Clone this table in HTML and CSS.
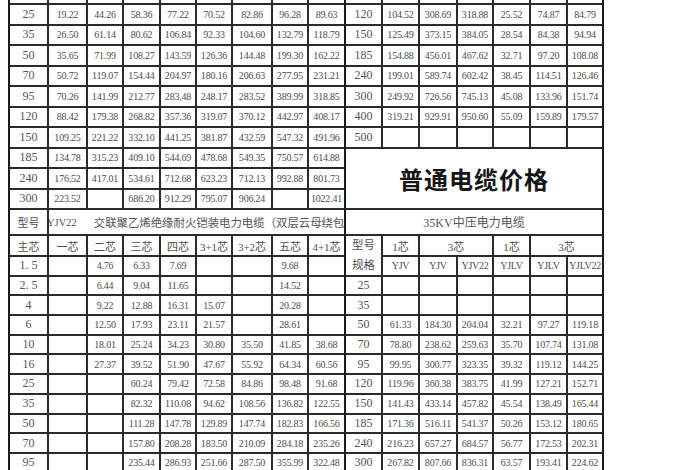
FILE: index.html
```html
<!DOCTYPE html>
<html lang="zh">
<head>
<meta charset="utf-8">
<title>普通电缆价格</title>
<link rel="stylesheet" href="styles.css">
</head>
<body>
<div class="sheet">
  <div class="grid left">
    <div class="c k">16</div><div class="c">12.17</div><div class="c">28.85</div><div class="c">38.04</div><div class="c">50.31</div><div class="c">46.12</div><div class="c">53.87</div><div class="c">62.77</div><div class="c">58.43</div>
    <div class="c k">25</div><div class="c">19.22</div><div class="c">44.26</div><div class="c">58.36</div><div class="c">77.22</div><div class="c">70.52</div><div class="c">82.86</div><div class="c">96.28</div><div class="c">89.63</div>
    <div class="c k">35</div><div class="c">26.50</div><div class="c">61.14</div><div class="c">80.62</div><div class="c">106.84</div><div class="c">92.33</div><div class="c">104.60</div><div class="c">132.79</div><div class="c">118.79</div>
    <div class="c k">50</div><div class="c">35.65</div><div class="c">71.99</div><div class="c">108.27</div><div class="c">143.59</div><div class="c">126.36</div><div class="c">144.48</div><div class="c">199.30</div><div class="c">162.22</div>
    <div class="c k">70</div><div class="c">50.72</div><div class="c">119.07</div><div class="c">154.44</div><div class="c">204.97</div><div class="c">180.16</div><div class="c">206.63</div><div class="c">277.95</div><div class="c">231.21</div>
    <div class="c k">95</div><div class="c">70.26</div><div class="c">141.99</div><div class="c">212.77</div><div class="c">283.48</div><div class="c">248.17</div><div class="c">283.52</div><div class="c">389.99</div><div class="c">318.85</div>
    <div class="c k">120</div><div class="c">88.42</div><div class="c">179.38</div><div class="c">268.82</div><div class="c">357.36</div><div class="c">319.07</div><div class="c">370.12</div><div class="c">442.97</div><div class="c">408.17</div>
    <div class="c k">150</div><div class="c">109.25</div><div class="c">221.22</div><div class="c">332.10</div><div class="c">441.25</div><div class="c">381.87</div><div class="c">432.59</div><div class="c">547.32</div><div class="c">491.96</div>
    <div class="c k">185</div><div class="c">134.78</div><div class="c">315.23</div><div class="c">409.10</div><div class="c">544.69</div><div class="c">478.68</div><div class="c">549.35</div><div class="c">750.57</div><div class="c">614.88</div>
    <div class="c k">240</div><div class="c">176.52</div><div class="c">417.01</div><div class="c">534.61</div><div class="c">712.68</div><div class="c">623.23</div><div class="c">712.13</div><div class="c">992.88</div><div class="c">801.73</div>
    <div class="c k">300</div><div class="c">223.52</div><div class="c"></div><div class="c">686.20</div><div class="c">912.29</div><div class="c">795.07</div><div class="c">906.24</div><div class="c"></div><div class="c">1022.41</div>

    <div class="c h">型号</div><div class="c model"><span class="code">YJV22</span><span class="desc">交联聚乙烯绝缘耐火铠装电力电缆（双层云母绕包）</span></div>

    <div class="c h">主芯</div><div class="c h">一芯</div><div class="c h">二芯</div><div class="c h">三芯</div><div class="c h">四芯</div><div class="c h">3+1芯</div><div class="c h">3+2芯</div><div class="c h">五芯</div><div class="c h">4+1芯</div>
    <div class="c k">1. 5</div><div class="c"></div><div class="c">4.76</div><div class="c">6.33</div><div class="c">7.69</div><div class="c"></div><div class="c"></div><div class="c">9.68</div><div class="c"></div>
    <div class="c k">2. 5</div><div class="c"></div><div class="c">6.44</div><div class="c">9.04</div><div class="c">11.65</div><div class="c"></div><div class="c"></div><div class="c">14.52</div><div class="c"></div>
    <div class="c k">4</div><div class="c"></div><div class="c">9.22</div><div class="c">12.88</div><div class="c">16.31</div><div class="c">15.07</div><div class="c"></div><div class="c">20.28</div><div class="c"></div>
    <div class="c k">6</div><div class="c"></div><div class="c">12.50</div><div class="c">17.93</div><div class="c">23.11</div><div class="c">21.57</div><div class="c"></div><div class="c">28.61</div><div class="c"></div>
    <div class="c k">10</div><div class="c"></div><div class="c">18.01</div><div class="c">25.24</div><div class="c">34.23</div><div class="c">30.80</div><div class="c">35.50</div><div class="c">41.85</div><div class="c">38.68</div>
    <div class="c k">16</div><div class="c"></div><div class="c">27.37</div><div class="c">39.52</div><div class="c">51.90</div><div class="c">47.67</div><div class="c">55.92</div><div class="c">64.34</div><div class="c">60.56</div>
    <div class="c k">25</div><div class="c"></div><div class="c"></div><div class="c">60.24</div><div class="c">79.42</div><div class="c">72.58</div><div class="c">84.86</div><div class="c">98.48</div><div class="c">91.68</div>
    <div class="c k">35</div><div class="c"></div><div class="c"></div><div class="c">82.32</div><div class="c">110.08</div><div class="c">94.62</div><div class="c">108.56</div><div class="c">136.82</div><div class="c">122.55</div>
    <div class="c k">50</div><div class="c"></div><div class="c"></div><div class="c">111.28</div><div class="c">147.78</div><div class="c">129.89</div><div class="c">147.74</div><div class="c">182.83</div><div class="c">166.56</div>
    <div class="c k">70</div><div class="c"></div><div class="c"></div><div class="c">157.80</div><div class="c">208.28</div><div class="c">183.50</div><div class="c">210.09</div><div class="c">284.18</div><div class="c">235.26</div>
    <div class="c k">95</div><div class="c"></div><div class="c"></div><div class="c">235.44</div><div class="c">286.93</div><div class="c">251.66</div><div class="c">287.50</div><div class="c">355.99</div><div class="c">322.48</div>
  </div>

  <div class="grid right">
    <div class="c k">95</div><div class="c">80.57</div><div class="c">238.18</div><div class="c">247.44</div><div class="c">20.41</div><div class="c">59.36</div><div class="c">66.74</div>
    <div class="c k">120</div><div class="c">104.52</div><div class="c">308.69</div><div class="c">318.88</div><div class="c">25.52</div><div class="c">74.87</div><div class="c">84.79</div>
    <div class="c k">150</div><div class="c">125.49</div><div class="c">373.15</div><div class="c">384.05</div><div class="c">28.54</div><div class="c">84.38</div><div class="c">94.94</div>
    <div class="c k">185</div><div class="c">154.88</div><div class="c">456.01</div><div class="c">467.62</div><div class="c">32.71</div><div class="c">97.20</div><div class="c">108.08</div>
    <div class="c k">240</div><div class="c">199.01</div><div class="c">589.74</div><div class="c">602.42</div><div class="c">38.45</div><div class="c">114.51</div><div class="c">126.46</div>
    <div class="c k">300</div><div class="c">249.92</div><div class="c">726.56</div><div class="c">745.13</div><div class="c">45.08</div><div class="c">133.96</div><div class="c">151.74</div>
    <div class="c k">400</div><div class="c">319.21</div><div class="c">929.91</div><div class="c">950.60</div><div class="c">55.09</div><div class="c">159.89</div><div class="c">179.57</div>
    <div class="c k">500</div><div class="c"></div><div class="c"></div><div class="c"></div><div class="c"></div><div class="c"></div><div class="c"></div>

    <div class="c title">普通电缆价格</div>

    <div class="c sub">35KV中压电力电缆</div>

    <div class="c h spec">型号<br>规格</div><div class="c h">1芯</div><div class="c h w2">3芯</div><div class="c h">1芯</div><div class="c h w2">3芯</div>
    <div class="c t">YJV</div><div class="c t">YJV</div><div class="c t">YJV22</div><div class="c t">YJLV</div><div class="c t">YJLV</div><div class="c t">YJLV22</div>
    <div class="c k">25</div><div class="c"></div><div class="c"></div><div class="c"></div><div class="c"></div><div class="c"></div><div class="c"></div>
    <div class="c k">35</div><div class="c"></div><div class="c"></div><div class="c"></div><div class="c"></div><div class="c"></div><div class="c"></div>
    <div class="c k">50</div><div class="c">61.33</div><div class="c">184.30</div><div class="c">204.04</div><div class="c">32.21</div><div class="c">97.27</div><div class="c">119.18</div>
    <div class="c k">70</div><div class="c">78.80</div><div class="c">238.62</div><div class="c">259.63</div><div class="c">35.70</div><div class="c">107.74</div><div class="c">131.08</div>
    <div class="c k">95</div><div class="c">99.95</div><div class="c">300.77</div><div class="c">323.35</div><div class="c">39.32</div><div class="c">119.12</div><div class="c">144.25</div>
    <div class="c k">120</div><div class="c">119.96</div><div class="c">360.38</div><div class="c">383.75</div><div class="c">41.99</div><div class="c">127.21</div><div class="c">152.71</div>
    <div class="c k">150</div><div class="c">141.43</div><div class="c">433.14</div><div class="c">457.82</div><div class="c">45.54</div><div class="c">138.49</div><div class="c">165.44</div>
    <div class="c k">185</div><div class="c">171.36</div><div class="c">516.11</div><div class="c">541.37</div><div class="c">50.26</div><div class="c">153.12</div><div class="c">180.65</div>
    <div class="c k">240</div><div class="c">216.23</div><div class="c">657.27</div><div class="c">684.57</div><div class="c">56.77</div><div class="c">172.53</div><div class="c">202.31</div>
    <div class="c k">300</div><div class="c">267.82</div><div class="c">807.66</div><div class="c">836.31</div><div class="c">63.57</div><div class="c">193.41</div><div class="c">224.62</div>
  </div>
</div>
</body>
</html>
```

FILE: styles.css
```css
html, body {
  margin: 0;
  padding: 0;
  background: #ffffff;
  overflow: hidden;
}

body {
  font-family: "Liberation Serif", "Noto Sans CJK SC", serif;
  color: #4d4d4d;
}

.sheet {
  display: flex;
  margin: -15.5px 0 0 8px;
}

.grid {
  display: grid;
  column-gap: 2px;
  row-gap: 2px;
  background: #2a2a2a;
  border-right: 2px solid #1c1c1c;
  grid-template-rows:
    18.5px 18.5px 18.5px 18.5px 18.5px 18.5px 18.5px 18.5px 18.5px 18.5px 18.5px
    24px
    19px
    17.7px 17.7px 17.7px 17.7px 17.7px 17.7px 17.7px 17.7px 17.7px 17.7px 17.7px;
}

.left {
  border-left: 2px solid #1c1c1c;
  grid-template-columns: 37px 37px 34px 35px 34px 34px 38px 34px 35px;
}

.right {
  grid-template-columns: 35px 35px 36px 34px 35px 35px 34px;
}

.c {
  background: #ffffff;
  display: flex;
  align-items: center;
  justify-content: center;
  font-size: 10px;
  white-space: nowrap;
  overflow: hidden;
  letter-spacing: -0.2px;
}

.k {
  font-size: 12px;
  color: #555555;
  letter-spacing: 0;
}

.h {
  font-size: 11px;
  color: #505050;
  letter-spacing: 0;
}

.t {
  font-size: 10px;
  letter-spacing: -0.3px;
}

.model {
  grid-column: span 8;
  justify-content: flex-start;
  font-size: 11.4px;
  color: #555555;
  letter-spacing: 0;
}

.model .code {
  margin-left: -2px;
  font-size: 10.5px;
}

.model .desc {
  margin-left: 17px;
}

.title {
  grid-column: span 7;
  grid-row: span 3;
  font-family: "Noto Sans CJK SC", "Noto Sans", sans-serif;
  font-size: 24px;
  font-weight: 700;
  color: #151515;
  letter-spacing: 1px;
}

.sub {
  grid-column: span 7;
  font-size: 12px;
  color: #555555;
  letter-spacing: 0;
}

.spec {
  grid-row: span 2;
  flex-direction: column;
  line-height: 20px;
  font-size: 11.5px;
}

.w2 {
  grid-column: span 2;
}
```
